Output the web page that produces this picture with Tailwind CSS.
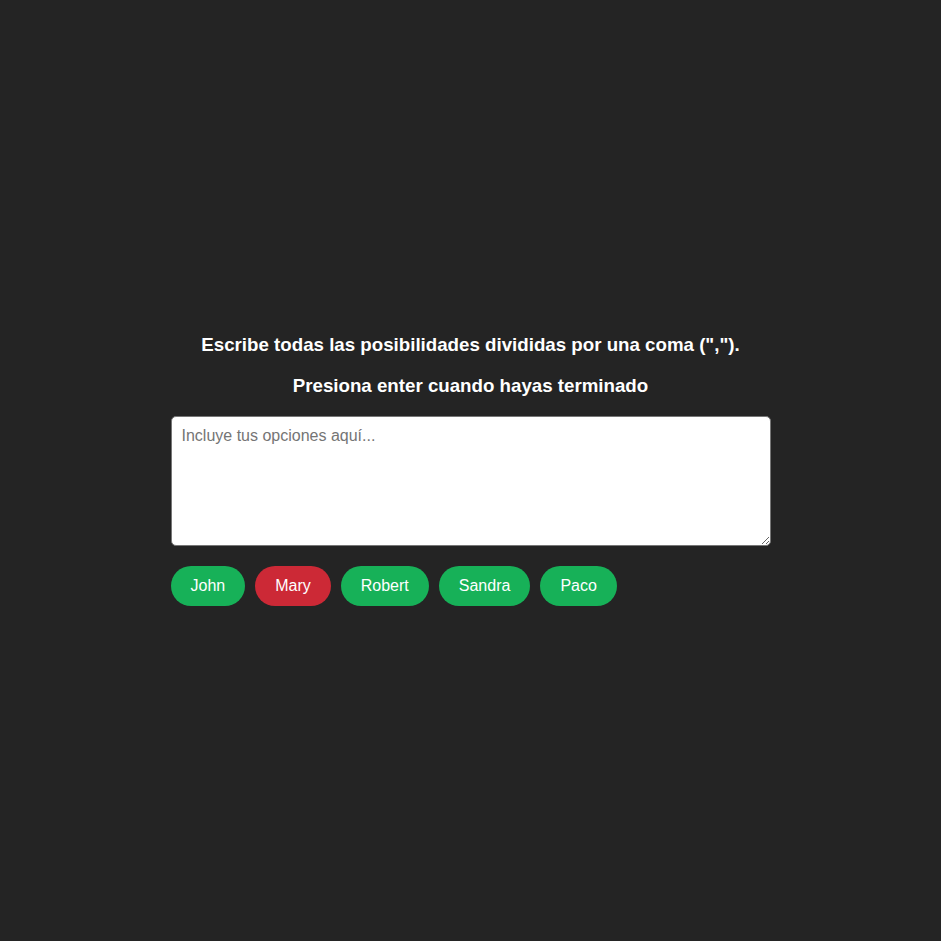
<!DOCTYPE html>
<html lang="es">
<head>
<meta charset="utf-8">
<title>Selector aleatorio</title>
<script src="https://cdn.jsdelivr.net/npm/@tailwindcss/browser@4"></script>
</head>
<body class="bg-[#242424] font-['Liberation_Sans',Arial,sans-serif] flex flex-col items-center justify-center h-screen overflow-hidden pb-[2px]">
<main class="w-[600px]">
<h3 class="text-white text-[18.72px] leading-[21px] font-bold text-center mb-5">Escribe todas las posibilidades divididas por una coma (",").</h3>
<h3 class="text-white text-[18.72px] leading-[21px] font-bold text-center mb-5">Presiona enter cuando hayas terminado</h3>
<textarea class="block w-full h-[130px] bg-white border border-[#767676] rounded-[5px] p-[10px] text-base leading-[18px] placeholder:text-[#757575] mb-5 resize" placeholder="Incluye tus opciones aquí..."></textarea>
<div class="flex gap-[10px] text-white text-base leading-[20px]">
<span class="bg-[#17b158] rounded-full px-5 py-[10px]">John</span>
<span class="bg-[#cc2936] rounded-full px-5 py-[10px]">Mary</span>
<span class="bg-[#17b158] rounded-full px-5 py-[10px]">Robert</span>
<span class="bg-[#17b158] rounded-full px-5 py-[10px]">Sandra</span>
<span class="bg-[#17b158] rounded-full px-5 py-[10px]">Paco</span>
</div>
</main>
</body>
</html>
